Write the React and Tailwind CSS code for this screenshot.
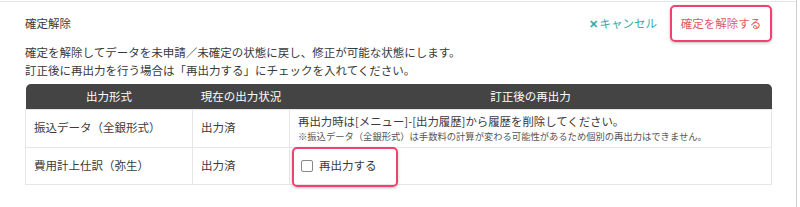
import React from "react";

const rows = [
  { format: "振込データ（全銀形式）", status: "出力済", kind: "note" },
  { format: "費用計上仕訳（弥生）", status: "出力済", kind: "check" },
];

const App = () => {
  return (
    <div
      className="w-[800px] h-[207px] bg-white flex overflow-hidden text-[#3a3a3a]"
      style={{ fontFamily: '"Noto Sans CJK JP", "Noto Sans", sans-serif' }}
    >
      <div className="w-[796px] mt-px border-t border-[#e6e6e6] pl-[25px] pr-[24px] pt-[3px]">
        <div className="flex items-center justify-between h-[37px]">
          <span className="text-[11.5px]">確定解除</span>
          <div className="flex items-center gap-[13px]">
            <button className="flex items-center gap-[2px] text-[11.5px] text-[#36aaa3]">
              <span className="text-[11px] font-bold">✕</span>
              キャンセル
            </button>
            <button className="w-[102px] h-[37px] border-2 border-[#f2406f] rounded-[5px] shadow-[0_1px_3px_rgba(0,0,0,0.25)] text-[11.5px] text-[#e25a61]">
              確定を解除する
            </button>
          </div>
        </div>

        <div className="mt-px text-[11.5px] leading-[18px]">
          <p>確定を解除してデータを未申請／未確定の状態に戻し、修正が可能な状態にします。</p>
          <p>訂正後に再出力を行う場合は「再出力する」にチェックを入れてください。</p>
        </div>

        <table className="mt-[5px] w-full table-fixed border-collapse text-[11.5px]">
          <colgroup>
            <col className="w-[167px]" />
            <col className="w-[97px]" />
            <col />
          </colgroup>
          <thead>
            <tr className="h-[25px] bg-[#444] text-white">
              <th className="font-normal rounded-tl-[5px]">出力形式</th>
              <th className="font-normal">現在の出力状況</th>
              <th className="font-normal rounded-tr-[5px]">訂正後の再出力</th>
            </tr>
          </thead>
          <tbody>
            {rows.map((row) => (
              <tr
                key={row.format}
                className={row.kind === "note" ? "h-[38px]" : "h-[37px]"}
              >
                <td className="border border-[#e6e6e6] px-[8px]">{row.format}</td>
                <td className="border border-[#e6e6e6] px-[8px]">{row.status}</td>
                <td className="relative border border-[#e6e6e6] px-[8px]">
                  {row.kind === "note" ? (
                    <div>
                      <p className="text-[11.4px] leading-[16px]">
                        再出力時は[メニュー]-[出力履歴]から履歴を削除してください。
                      </p>
                      <p className="text-[9.3px] leading-[15px] text-[#555]">
                        ※振込データ（全銀形式）は手数料の計算が変わる可能性があるため個別の再出力はできません。
                      </p>
                    </div>
                  ) : (
                    <>
                      <label className="flex items-center gap-[6px] pl-[3px]">
                        <span className="w-[12px] h-[12px] border border-[#888] rounded-[2px] bg-white" />
                        <span>再出力する</span>
                      </label>
                      <div className="absolute left-[2px] top-[-1px] w-[106px] h-[40px] border-2 border-[#f2406f] rounded-[5px] shadow-[0_1px_3px_rgba(0,0,0,0.25)] pointer-events-none" />
                    </>
                  )}
                </td>
              </tr>
            ))}
          </tbody>
        </table>
      </div>
      <div className="flex-1 border-l border-[#cfcfcf] bg-white" />
    </div>
  );
};

export default App;
